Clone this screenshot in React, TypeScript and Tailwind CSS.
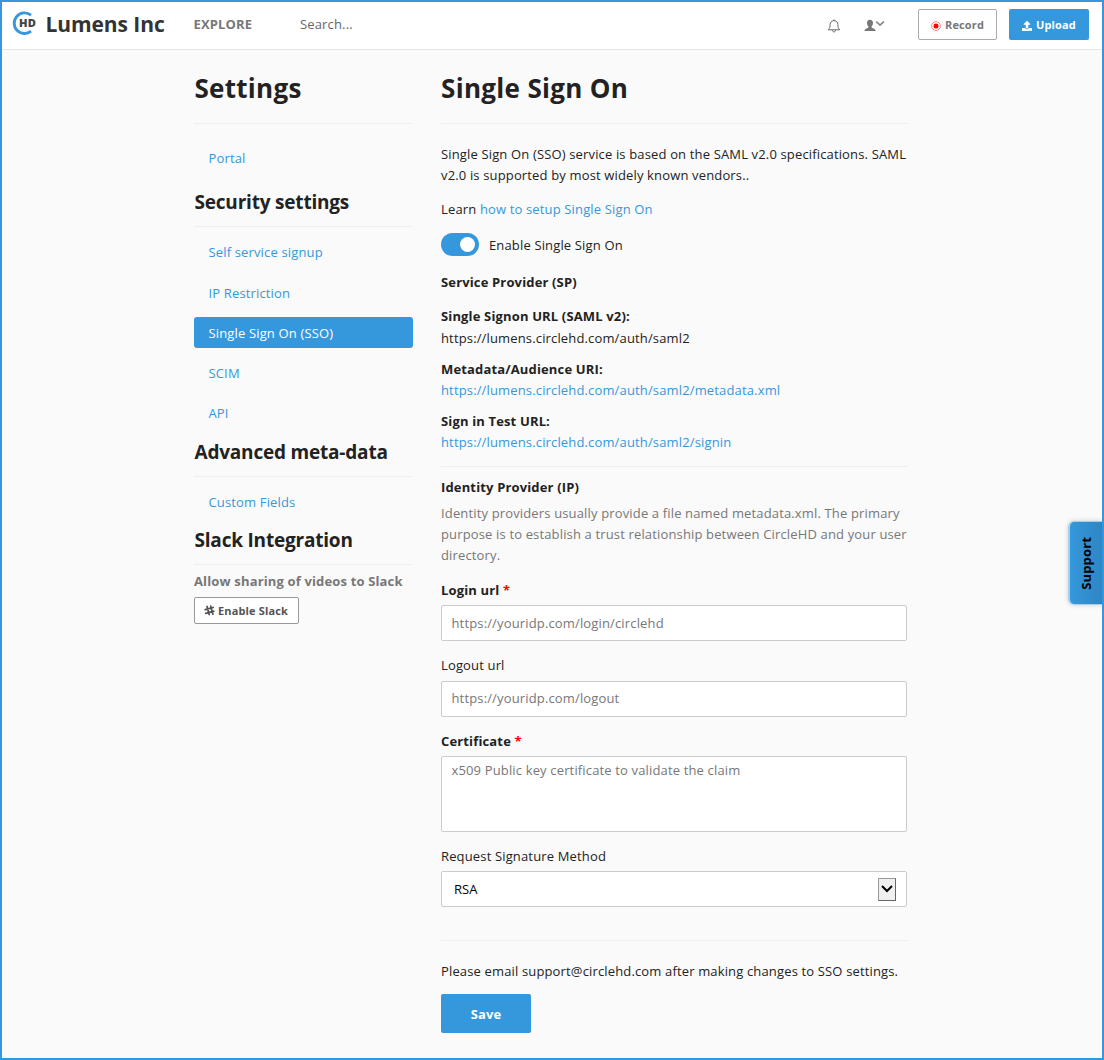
import React from "react";
import { FaUpload } from "react-icons/fa";

function Logo() {
  return (
    <svg width="25" height="25" viewBox="0 0 25 25" className="shrink-0">
      <path d="M19 4.200A10.300 10.300 0 1 0 19 20.200" fill="none" stroke="#3598dc" strokeWidth="2.900" />
      <text x="7" y="16" fontSize="10.500" fontWeight="800" fill="#444" textLength="17" lengthAdjust="spacingAndGlyphs" fontFamily="Open Sans, sans-serif">HD</text>
    </svg>
  );
}

function Bell() {
  return (
    <svg width="14" height="14" viewBox="0 0 14 14" fill="none" stroke="#666" strokeWidth="1">
      <path d="M7 .4v1.2M1.2 10.8C2.9 9.300 3.100 7.800 3.100 5.600C3.100 3.100 4.700 1.700 7 1.700s3.900 1.400 3.900 3.900c0 2.200.2 3.700 1.900 5.200zM5.500 11.200c0 1 .6 1.700 1.500 1.700s1.500-.7 1.500-1.700" />
    </svg>
  );
}

function UserMenu() {
  return (
    <svg width="21" height="13" viewBox="0 0 21 13">
      <path d="M6 .8c-2.100 0-3 1.400-3 3.200 0 1.500.6 2.600 1.400 3.300v.9C4.300 9.300.5 9.200.4 12h11.300c-.1-2.800-4-2.700-4.100-3.800v-.9C8.400 6.600 9 5.500 9 4 9 2.200 8.100.8 6 .8z" fill="#777" />
      <path d="M12.300 2.700l3.700 3.500 3.900-3.500" fill="none" stroke="#888" strokeWidth="1.700" />
    </svg>
  );
}

function SlackHash() {
  return (
    <svg width="11" height="11" viewBox="0 0 11 11" className="mr-[3px]" fill="none" stroke="#555" strokeWidth="1.800" strokeLinecap="round">
      <path d="M3 1.500l2.200 8M6.700 1.200l2.200 8M1.200 4.700l8-2.200M1.800 8.400l8-2.200" />
    </svg>
  );
}

function NavLink({ children, className }: { children: React.ReactNode; className: string }) {
  return <a className={`block h-[31px] rounded-[3px] pl-[14.500px] leading-[31px] ${className}`}>{children}</a>;
}

function SideHeading({ children, className }: { children: React.ReactNode; className: string }) {
  return (
    <h3 className={`h-[37px] border-b border-[#eee] pl-[0.500px] text-[19px] font-bold tracking-[-0.2px] leading-[25px] text-[#222] ${className}`}>
      {children}
    </h3>
  );
}

export default function App() {
  return (
    <div className="relative h-[1060px] w-[1104px] overflow-hidden border-2 border-[#3598dc] bg-[#fafafa] font-['Open_Sans',sans-serif] text-[13px] leading-[21px] tracking-[0.15px] text-[#222]">
      <header className="flex h-[48px] items-start border-b border-[#e7e7e7] bg-white">
        <div className="mt-[9px] ml-[10px]"><Logo /></div>
        <div className="mt-[7px] ml-[8.500px] w-[148px] whitespace-nowrap text-[21px] font-bold leading-[30px] tracking-[-0.08px] text-[#333]">Lumens Inc</div>
        <div className="mt-[12px] w-[106.500px] font-bold text-[#777]">EXPLORE</div>
        <div className="mt-[12px] w-[527px] text-[#666]">Search...</div>
        <div className="mt-[17px] w-[37px]"><Bell /></div>
        <div className="mt-[17px] w-[54px]"><UserMenu /></div>
        <button className="mt-[7px] flex h-[31px] w-[79px] items-center rounded-[2px] border border-[#aaa] pl-[12px] text-[11px] font-bold text-[#777]">
          <svg width="10" height="10" viewBox="0 0 10 10" className="mt-[2px] mr-[4px]">
            <circle cx="5" cy="5" r="4.400" fill="none" stroke="#ff7777" strokeWidth=".9" />
            <circle cx="5" cy="5" r="2.500" fill="#f00" />
          </svg>
          Record
        </button>
        <button className="mt-[7px] ml-[12px] flex h-[31px] w-[80px] items-center rounded-[2px] bg-[#3598dc] pl-[13px] text-[11px] font-bold text-white">
          <FaUpload className="mt-[2px] mr-[4px] size-[10px]" />
          Upload
        </button>
      </header>

      <div className="ml-[192px] flex">
        <aside className="w-[219px] text-[#3598dc]">
          <h1 className="h-[74px] border-b border-[#eee] pt-[20px] pl-[0.500px] text-[26px] font-bold leading-[36px] tracking-[0.280px] text-[#222]">Settings</h1>
          <NavLink className="mt-[19px]">Portal</NavLink>
          <SideHeading className="mt-[16px]">Security settings</SideHeading>
          <NavLink className="mt-[10px]">Self service signup</NavLink>
          <NavLink className="mt-[10px]">IP Restriction</NavLink>
          <NavLink className="mt-[8px] bg-[#3598dc] pt-px text-white">Single Sign On (SSO)</NavLink>
          <NavLink className="mt-[10px]">SCIM</NavLink>
          <NavLink className="mt-[9px]">API</NavLink>
          <SideHeading className="mt-[11px]">Advanced meta-data</SideHeading>
          <NavLink className="mt-[10px]">Custom Fields</NavLink>
          <SideHeading className="mt-[10px]">Slack Integration</SideHeading>
          <p className="mt-[6px] font-bold text-[#777]">Allow sharing of videos to Slack</p>
          <button className="mt-[5px] flex h-[27px] w-[105px] items-center rounded-[2px] border border-[#999] bg-white pl-[9px] text-[11px] font-bold text-[#555]">
            <SlackHash />
            Enable Slack
          </button>
        </aside>

        <main className="ml-[28px] w-[467px]">
          <h1 className="h-[74px] border-b border-[#eee] pt-[20px] text-[26px] font-bold leading-[36px] tracking-[0.330px]">Single Sign On</h1>
          <p className="mt-[20px] whitespace-nowrap">
            Single Sign On (SSO) service is based on the SAML v2.0 specifications. SAML<br />v2.0 is supported by most widely known vendors..
          </p>
          <p className="mt-[13px]">Learn <a className="text-[#3598dc]">how to setup Single Sign On</a></p>
          <div className="mt-[13px] flex h-[23px] items-center">
            <span className="flex h-[23px] w-[38px] items-center justify-end rounded-full bg-[#3598dc] pr-[4px]">
              <span className="size-[15px] rounded-full bg-white" />
            </span>
            <span className="mt-[2px] ml-[10px]">Enable Single Sign On</span>
          </div>
          <p className="mt-[16px] font-bold">Service Provider (SP)</p>
          <p className="mt-[13px] font-bold">Single Signon URL (SAML v2):</p>
          <p className="mt-[1px]">https://lumens.circlehd.com/auth/saml2</p>
          <p className="mt-[10px] font-bold">Metadata/Audience URI:</p>
          <p className="text-[#3598dc]">https://lumens.circlehd.com/auth/saml2/metadata.xml</p>
          <p className="mt-[10px] font-bold">Sign in Test URL:</p>
          <p className="text-[#3598dc]">https://lumens.circlehd.com/auth/saml2/signin</p>
          <hr className="mt-[13px] border-[#eee]" />
          <p className="mt-[10px] font-bold">Identity Provider (IP)</p>
          <p className="mt-[5px] whitespace-nowrap text-[#777]">
            Identity providers usually provide a file named metadata.xml. The primary<br />purpose is to establish a trust relationship between CircleHD and your user<br />directory.
          </p>
          <p className="mt-[14px] font-bold">Login url <span className="text-[#f00]">*</span></p>
          <div className="mt-[4px] h-[36px] w-[466px] rounded-[2px] border border-[#ccc] bg-white pl-[9.500px] leading-[34px] text-[#777]">https://youridp.com/login/circlehd</div>
          <p className="mt-[14px]">Logout url</p>
          <div className="mt-[5px] h-[36px] w-[466px] rounded-[2px] border border-[#ccc] bg-white pl-[9.500px] leading-[33px] text-[#777]">https://youridp.com/logout</div>
          <p className="mt-[14px] font-bold">Certificate <span className="text-[#f00]">*</span></p>
          <div className="mt-[4px] h-[76px] w-[466px] rounded-[2px] border border-[#ccc] bg-white pt-[3px] pl-[9.500px] text-[#777]">x509 Public key certificate to validate the claim</div>
          <p className="mt-[14px]">Request Signature Method</p>
          <div className="mt-[4px] flex h-[36px] w-[466px] items-center justify-between rounded-[2px] border border-[#ccc] bg-white pr-[10px] pl-[12px] tracking-normal text-black">
            RSA
            <span className="flex h-[23px] w-[18px] items-center justify-center border border-[#666] border-t-[#999] border-l-[#999] bg-[#f0f0f0]">
              <svg width="12" height="8" viewBox="0 0 12 8"><path d="M1 1l5 5 5-5" fill="none" stroke="#000" strokeWidth="2" /></svg>
            </span>
          </div>
          <hr className="mt-[33px] border-[#eee]" />
          <p className="mt-[20px] whitespace-nowrap">Please email support@circlehd.com after making changes to SSO settings.</p>
          <button className="mt-[12px] h-[39px] w-[90px] rounded-[2px] bg-[#3598dc] pt-px text-[13px] font-bold text-white">Save</button>
        </main>
      </div>

      <div className="absolute top-[519px] right-0 flex h-[84px] w-[34px] items-center justify-center rounded-l-[6px] border-y border-l-2 border-[#a5d0ee] bg-gradient-to-r from-[#3598dc] to-[#2e86c4] shadow-[0_0_5px_rgba(0,0,0,0.18)]">
        <span className="rotate-180 text-[13px] font-bold text-black [writing-mode:vertical-rl]">Support</span>
      </div>
    </div>
  );
}
